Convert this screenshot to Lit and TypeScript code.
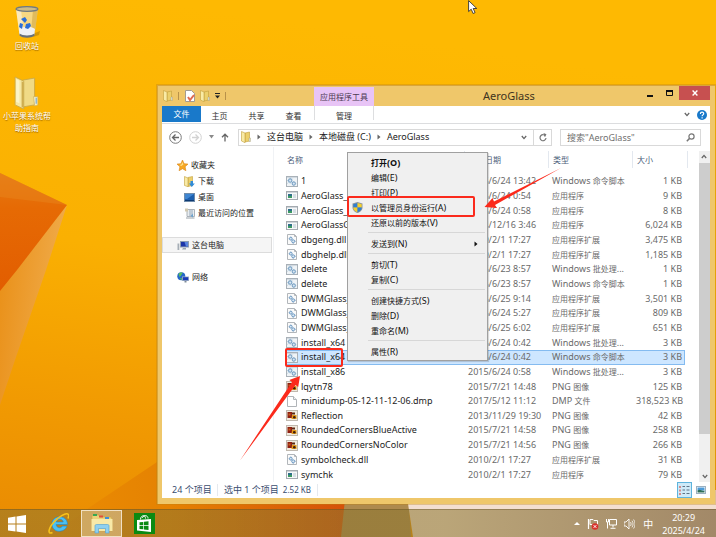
import { LitElement, html, css, svg, nothing, type TemplateResult } from "lit";
import { customElement, property, state } from "lit/decorators.js";
import { classMap } from "lit/directives/class-map.js";

/* Han runs are set one step smaller than the Latin text beside them. */
const t = (text: string) =>
  text
    .split(/([\u4e00-\u9fff]+)/)
    .filter((part) => part !== "")
    .map((part) => (/[\u4e00-\u9fff]/.test(part) ? html`<span class="han">${part}</span>` : part));

const base = css`
  * {
    box-sizing: border-box;
  }
  .han {
    font-size: 8px;
  }
  button,
  input {
    font: inherit;
    color: inherit;
    background: none;
    border: 0;
    padding: 0;
    margin: 0;
    white-space: nowrap;
  }
  a {
    color: inherit;
    text-decoration: none;
  }
  svg {
    display: block;
    flex: none;
  }
`;

const icon = (size: number, body: TemplateResult, h = size) =>
  html`<svg width=${size} height=${h} viewBox="0 0 ${size} ${h}" aria-hidden="true">${body}</svg>`;

const gears = svg`
  <g fill="#dbe8f3" stroke="#7ba3c6" stroke-width="1.1">
    <circle cx="4.2" cy="4.6" r="1.7"/><circle cx="7.8" cy="7.6" r="1.6"/>
  </g>
  <path d="M4.2 1.8v1M4.2 6.400v1M1.400 4.600h1M7.800 5v1M10.200 7.600h-1M7.800 9.300v.8M6.400 2.800l-.7.7M2.300 6.500l-.7.7" stroke="#8fb0cc" stroke-width="1"/>`;

const fileIcons: Record<string, TemplateResult> = {
  cmd: icon(12, svg`<rect x=".5" y=".5" width="11" height="10" fill="#eff3f6" stroke="#a9b1b8"/><path d="M1 1h10v1H1z" fill="#d2dae1"/>${gears}`, 11),
  exe: icon(12, svg`<rect x=".5" y="1.5" width="11" height="8" fill="#f7f8f9" stroke="#a4aab0"/><path d="M1 2h10v1H1z" fill="#cfd5da"/><rect x="2" y="4" width="4" height="4" fill="#2f6f8a"/><path d="M2 6h4v2H2z" fill="#3c9a62"/><path d="M7 4h3v4H7z" fill="#d6dfe5"/>`, 11),
  dll: icon(12, svg`<path d="M1.500.5h7l2 2v8h-9z" fill="#fafafa" stroke="#b2b6ba"/><path d="M8.500.5v2h2" fill="none" stroke="#b2b6ba"/><g fill="#dbe8f3" stroke="#6f9bc4" stroke-width="1"><circle cx="4.800" cy="4.700" r="1.400"/><circle cx="7.200" cy="7.300" r="1.500"/></g><path d="M4.800 2.600v.8M2.700 4.700h.8M7.200 9.300v.7M9.200 7.300h.7" stroke="#86a9c9"/>`, 11),
  png: icon(12, svg`<rect x=".5" y=".5" width="11" height="10" fill="#f1eadf" stroke="#c0b9af"/><rect x="1.500" y="2" width="4.500" height="6" fill="#8e1f12"/><path d="M2.500 3.500h2v2h-2z" fill="#c9601c"/><path d="M6 5h4.500v4H5.500z" fill="#e59a1a"/><circle cx="8.300" cy="7.300" r="1.300" fill="#3c1c10"/><path d="M6 2.500h3v2H6z" fill="#5d2a12"/>`, 11),
  dmp: icon(12, svg`<path d="M1.500.5h6l3 3v7h-9z" fill="#fff" stroke="#b0b4b8"/><path d="M7.500.5v3h3" fill="#eef0f2" stroke="#b0b4b8"/>`, 11),
};

const folder = (w: number, h: number) => html`<svg width=${w} height=${h} viewBox="0 0 24 32" preserveAspectRatio="none" aria-hidden="true">
  <path d="M8 4l11-2v26l-11 2z" fill="#f0da86" stroke="#c9a94a" stroke-width=".8"/>
  <path d="M18 20h4v8l-3 1z" fill="#f7efc4" stroke="#c9ae5a" stroke-width=".6"/>
  <path d="M20.500 21v6" stroke="#6ba3cf" stroke-width="1"/>
  <path d="M1 1l8 4v27l-8-4z" fill="#f6e7a2" stroke="#c9a94a" stroke-width=".8"/>
  <path d="M7 5l2 1v25l-2-1z" fill="#cfae50"/>
  <path d="M2 3l3 1.500v22L2 25z" fill="#fdf7d2" opacity=".8"/>
</svg>`;

const smallFolder = (w: number, h: number) => html`<svg width=${w} height=${h} viewBox="0 0 10 12" aria-hidden="true">
  <path d="M4 2l4.500-1v9L4 11z" fill="#ecd06c" stroke="#c39f3c" stroke-width=".6"/>
  <path d="M.5.500L4 2v9.700L.5 10z" fill="#f9eba6" stroke="#c39f3c" stroke-width=".6"/>
  <path d="M8 7h1.500v3.500H8z" fill="#d9e4e4" stroke="#a99a60" stroke-width=".4"/>
</svg>`;

const chevron = () => html`<svg width="6" height="5" viewBox="0 0 6 5" aria-hidden="true"><path d="M.8 1L3 3.600 5.200 1" fill="none" stroke="#666" stroke-width="1.300"/></svg>`;
const crumb = html`<svg width="4" height="6" viewBox="0 0 4 6" aria-hidden="true"><path d="M.5.5L3.500 3 .5 5.500z" fill="#666"/></svg>`;

interface FileRow {
  kind: string;
  name: string;
  date: string;
  type: string;
  size: string;
}

const f = (kind: string, name: string, date: string, type: string, size: string): FileRow => ({ kind, name, date, type, size });

const CMD = "Windows 命令脚本";
const BAT = "Windows 批处理...";
const APP = "应用程序";
const EXT = "应用程序扩展";
const PNG = "PNG 图像";

const FILES: FileRow[] = [
  f("cmd", "1", "2015/6/24 13:42", CMD, "1 KB"),
  f("exe", "AeroGlass_x64", "2015/6/24 0:54", APP, "9 KB"),
  f("exe", "AeroGlass_x86", "2015/6/24 0:58", APP, "8 KB"),
  f("exe", "AeroGlassGUI", "2014/12/16 3:46", APP, "6,024 KB"),
  f("dll", "dbgeng.dll", "2010/2/1 17:27", EXT, "3,475 KB"),
  f("dll", "dbghelp.dll", "2010/2/1 17:27", EXT, "1,185 KB"),
  f("cmd", "delete", "2015/6/23 8:57", BAT, "1 KB"),
  f("cmd", "delete", "2015/6/23 8:57", CMD, "1 KB"),
  f("dll", "DWMGlass_a", "2015/6/25 9:14", EXT, "3,501 KB"),
  f("dll", "DWMGlass_b", "2015/6/24 5:27", EXT, "809 KB"),
  f("dll", "DWMGlass_c", "2015/6/25 6:02", EXT, "651 KB"),
  f("cmd", "install_x64", "2015/6/24 0:42", BAT, "3 KB"),
  f("cmd", "install_x64", "2015/6/24 0:42", CMD, "3 KB"),
  f("cmd", "install_x86", "2015/6/24 0:58", BAT, "3 KB"),
  f("png", "lqytn78", "2015/7/21 14:48", PNG, "125 KB"),
  f("dmp", "minidump-05-12-11-12-06.dmp", "2017/5/12 11:12", "DMP 文件", "318,523 KB"),
  f("png", "Reflection", "2013/11/29 19:30", PNG, "42 KB"),
  f("png", "RoundedCornersBlueActive", "2015/7/21 14:58", PNG, "258 KB"),
  f("png", "RoundedCornersNoColor", "2015/7/21 14:56", PNG, "266 KB"),
  f("dll", "symbolcheck.dll", "2010/2/1 17:27", EXT, "31 KB"),
  f("exe", "symchk", "2010/2/1 17:27", APP, "79 KB"),
];

@customElement("context-menu")
class ContextMenu extends LitElement {
  static styles = [
    base,
    css`
      :host {
        display: block;
        padding: 2px 2px 1px;
        background: #f0f0f0;
        border: 1px solid #a0a0a0;
        box-shadow: 1px 1px 1px rgba(0, 0, 0, 0.15);
      }
      .menu {
        display: flex;
        flex-direction: column;
      }
      .item {
        display: grid;
        grid-template-columns: 21px 1fr auto;
        align-items: center;
        height: 15px;
        padding-right: 7px;
        line-height: 15px;
        text-align: left;
        color: #111;
      }
      .main {
        font-weight: 700;
      }
      .shield {
        margin-left: 2px;
      }
      .sep {
        height: 1px;
        margin: 2px 0 3px 18px;
        border: 0;
        background: #d7d7d7;
      }
    `,
  ];

  private readonly groups = [
    ["打开(O)", "编辑(E)", "打印(P)", "以管理员身份运行(A)", "还原以前的版本(V)"],
    ["发送到(N)"],
    ["剪切(T)", "复制(C)"],
    ["创建快捷方式(S)", "删除(D)", "重命名(M)"],
    ["属性(R)"],
  ];

  private item(label: string) {
    const admin = label.endsWith("(A)");
    return html`<button role="menuitem" class=${classMap({ item: true, main: label.endsWith("(O)") })}>
      <span class="shield">${admin
        ? icon(11, svg`<path d="M5.500 0l5 1.500v4c0 3-2.500 4.700-5 5.500-2.500-.8-5-2.500-5-5.500v-4z" fill="#8d959c"/><path d="M5.500 1v4.500H1.300V2.200z" fill="#2f7fd0"/><path d="M5.500 1v4.500h4.200V2.200z" fill="#f5d02c"/><path d="M5.500 5.500v4.700C3.300 9.400 1.300 8 1.300 5.500z" fill="#f5d02c"/><path d="M5.500 5.500v4.700c2.200-.8 4.200-2.200 4.200-4.700z" fill="#2f7fd0"/>`)
        : nothing}</span>
      <span>${t(label)}</span>
      ${label.endsWith("(N)") ? icon(4, svg`<path d="M.5.500L3.500 3l-3 2.500z" fill="#111"/>`, 6) : nothing}
    </button>`;
  }

  render() {
    return html`<div class="menu" role="menu">
      ${this.groups.map((group, i) => html`${i ? html`<hr class="sep" />` : nothing}${group.map((l) => this.item(l))}`)}
    </div>`;
  }
}

@customElement("file-list")
class FileList extends LitElement {
  @property({ type: Number }) selected = -1;

  static styles = [
    base,
    css`
      :host {
        display: grid;
        grid-template-columns: 1fr 11px;
        min-width: 0;
        min-height: 0;
      }
      .list {
        padding-left: 11px;
        padding-right: 14px;
        min-width: 0;
      }
      table {
        width: 100%;
        height: 100%;
        table-layout: fixed;
        border-collapse: collapse;
        white-space: nowrap;
      }
      th,
      td {
        padding: 0;
        line-height: 12px;
        vertical-align: middle;
        font-weight: 400;
        text-align: left;
      }
      .head {
        height: 27px;
        color: #4c607a;
      }
      .label {
        display: block;
        height: 17px;
        margin: 4px 0 6px;
        padding-left: 4px;
        line-height: 18px;
        border-left: 1px solid #e3e8ef;
      }
      .first {
        padding-left: 1px;
        border-left-color: transparent;
      }
      .last {
        margin-right: -3px;
        border-right: 1px solid #e3e8ef;
      }
      .date,
      .type {
        width: 84px;
      }
      .size {
        width: 53px;
      }
      td {
        color: #6a6a6a;
        padding-left: 4px;
      }
      .namecell {
        padding-left: 1px;
        color: #1c1c1c;
      }
      .name {
        display: flex;
        align-items: center;
        gap: 3px;
      }
      .num {
        text-align: right;
        padding-right: 3px;
      }
      .sel {
        background: #cde6ff;
        outline: 1px solid #84bbf0;
        outline-offset: -1px;
      }
      .scroll {
        display: flex;
        flex-direction: column;
        align-items: center;
        margin-top: 4px;
        background: #f0f0f0;
      }
      .arrow {
        display: grid;
        place-items: center;
        width: 11px;
        height: 12px;
      }
      .up {
        transform: rotate(180deg);
      }
      .thumb {
        width: 11px;
        height: 82%;
        background: #cdcdcd;
      }
      .track {
        flex: 1;
      }
    `,
  ];

  render() {
    return html`
      <div class="list">
        <table>
          <thead>
            <tr class="head">
              <th><span class="label first">${t("名称")}</span></th>
              <th class="date"><span class="label">${t("修改日期")}</span></th>
              <th class="type"><span class="label">${t("类型")}</span></th>
              <th class="size"><span class="label last">${t("大小")}</span></th>
            </tr>
          </thead>
          <tbody>
            ${FILES.map(
              (row, i) => html`<tr class=${classMap({ sel: i === this.selected })}>
                <td class="namecell"><span class="name">${fileIcons[row.kind]}<span>${row.name}</span></span></td>
                <td>${row.date}</td>
                <td>${t(row.type)}</td>
                <td class="num">${row.size}</td>
              </tr>`
            )}
          </tbody>
        </table>
      </div>
      <div class="scroll">
        <button class="arrow up" aria-label="向上滚动">${chevron()}</button>
        <div class="thumb"></div>
        <div class="track"></div>
        <button class="arrow" aria-label="向下滚动">${chevron()}</button>
      </div>
    `;
  }
}

@customElement("explorer-window")
class ExplorerWindow extends LitElement {
  @state() private selected = 12;

  static styles = [
    base,
    css`
      :host {
        display: flex;
        flex-direction: column;
        padding: 0 5px 6px 4px;
        background: #efc76a;
        border: solid #d8a53c;
        border-width: 1px 0 0 1px;
        box-shadow: 0 0 0 1px rgba(190, 130, 20, 0.35);
      }
      .title {
        display: grid;
        grid-template-columns: 152px 60px 1fr auto;
        height: 20px;
      }
      .quick {
        display: flex;
        align-items: center;
        gap: 5px;
        padding-left: 1px;
      }
      .bar {
        width: 1px;
        height: 8px;
        background: #b8924a;
      }
      .tool {
        margin-top: 1px;
        background: #e8c4f6;
        color: #4a3a52;
        text-align: center;
        line-height: 19px;
      }
      .caption {
        padding-left: 109px;
        font-size: 11px;
        line-height: 20px;
        color: #3f3420;
      }
      .controls {
        display: flex;
        align-items: flex-start;
      }
      .ctl {
        display: grid;
        place-items: center;
        width: 19px;
        height: 15px;
      }
      .close {
        width: 31px;
        height: 14px;
        background: #c75050;
      }
      .ribbon {
        display: flex;
        height: 18px;
        background: #fff;
        border-bottom: 1px solid #dcdddf;
        line-height: 19px;
        color: #333;
      }
      .tab {
        width: 37px;
        text-align: center;
      }
      .file {
        width: 39px;
        height: 16px;
        line-height: 16px;
        background: #1979ca;
        color: #fff;
      }
      .tabs {
        display: flex;
        flex: 1;
      }
      .manage {
        width: 60px;
        height: 14px;
        margin-left: 2px;
        line-height: 19px;
        border: solid #dddee0;
        border-width: 0 1px;
      }
      .right {
        display: flex;
        align-items: center;
        gap: 7px;
        padding-right: 3px;
      }
      .nav {
        display: flex;
        align-items: center;
        height: 23px;
        padding: 3px 9px 0 7px;
        background: #fff;
        color: #222;
      }
      .history {
        display: flex;
        align-items: center;
        gap: 7px;
        width: 69px;
      }
      .address {
        display: flex;
        flex: 1;
        align-items: center;
        gap: 6px;
        height: 17px;
        padding-left: 2px;
        border: 1px solid #d9d9d9;
      }
      .address .han {
        font-size: 9px;
      }
      .fill {
        flex: 1;
      }
      .refresh {
        display: grid;
        place-items: center;
        width: 18px;
        height: 15px;
        border-left: 1px solid #d9d9d9;
      }
      .search {
        display: flex;
        align-items: center;
        width: 141px;
        height: 17px;
        margin-left: 8px;
        padding: 0 5px 0 6px;
        border: 1px solid #d9d9d9;
      }
      .query {
        flex: 1;
        min-width: 0;
        height: 15px;
        outline: none;
      }
      .query::placeholder {
        color: #6f6f6f;
        opacity: 1;
      }
      .body {
        display: grid;
        grid-template-columns: 112px 1fr;
        flex: 1;
        min-height: 0;
        background: #fff;
      }
      .side {
        display: flex;
        flex-direction: column;
        gap: 16px;
        padding-top: 10px;
        border-right: 1px solid #f0f2f5;
        color: #222;
      }
      .group {
        display: flex;
        flex-direction: column;
      }
      .place {
        display: flex;
        align-items: center;
        gap: 3px;
        height: 16px;
        padding-left: 14px;
        border: 1px solid transparent;
      }
      .sub {
        padding-left: 21px;
      }
      .current {
        margin-right: 1px;
        background: #f5f5f5;
        border-color: #dcdcdc;
      }
      .status {
        display: flex;
        align-items: center;
        height: 16px;
        padding-left: 10px;
        background: #fff;
        color: #3a4d6e;
      }
      .status .han {
        font-size: 9px;
      }
      .count {
        width: 46px;
        border-right: 1px solid #e6e9ee;
      }
      .chosen {
        display: flex;
        gap: 4px;
        margin-left: 6px;
        padding-right: 6px;
        border-right: 1px solid #e6e9ee;
      }
      .bytes {
        font-size: 8px;
      }
      .view {
        display: grid;
        place-items: center;
        width: 15px;
        height: 16px;
      }
      .on {
        background: #cfeaf8;
        border: 1px solid #5eb4dd;
      }
      .views {
        display: flex;
        gap: 1px;
        margin-left: auto;
        padding-right: 2px;
      }
      context-menu {
        position: absolute;
        left: 189px;
        top: 66px;
        width: 141px;
      }
      .marks {
        position: absolute;
        left: 79px;
        top: 63px;
        pointer-events: none;
      }
    `,
  ];

  private title() {
    return html`<header class="title">
      <div class="quick">
        ${smallFolder(10, 12)}
        <span class="bar"></span>
        <button aria-label="属性">${icon(11, svg`<path d="M1.500.5h6l3 3v8h-9z" fill="#fff" stroke="#a39c90"/><path d="M4 7l2 3 4-5" fill="none" stroke="#e06a50" stroke-width="2"/>`, 12)}</button>
        <button aria-label="新建文件夹">${smallFolder(10, 12)}</button>
        <button aria-label="自定义快速访问工具栏">${icon(5, svg`<path d="M0 0h5v1H0zM0 2.500h5L2.500 5.500z" fill="#222"/>`, 6)}</button>
        <span class="bar"></span>
      </div>
      <span class="tool">${t("应用程序工具")}</span>
      <span class="caption">AeroGlass</span>
      <div class="controls">
        <button class="ctl" aria-label="最小化">${icon(7, svg`<path d="M0 6h6v2H0z" fill="#111"/>`, 10)}</button>
        <button class="ctl" aria-label="最大化">${icon(7, svg`<path d="M.5.500h6v5h-6z" fill="none" stroke="#111"/><path d="M0 0h7v2H0z" fill="#111"/>`, 8)}</button>
        <button class="ctl close" aria-label="关闭">${icon(6, svg`<path d="M.6.600l4.800 4.800M5.400.600L.6 5.400" stroke="#fff" stroke-width="1.400"/>`)}</button>
      </div>
    </header>`;
  }

  private nav() {
    return html`<div class="nav">
      <div class="history">
        <button aria-label="后退">${icon(13, svg`<circle cx="6.500" cy="6.500" r="5.800" fill="none" stroke="#7b7b7b"/><path d="M10 6.500H3.500M6.500 3.500l-3 3 3 3" fill="none" stroke="#666" stroke-width="1.300"/>`)}</button>
        <button aria-label="前进">${icon(13, svg`<circle cx="6.500" cy="6.500" r="5.800" fill="none" stroke="#d2d2d2"/><path d="M3 6.500h6.500M6.500 3.500l3 3-3 3" fill="none" stroke="#d2d2d2" stroke-width="1.300"/>`)}</button>
        <button aria-label="最近浏览的位置">${icon(5, svg`<path d="M0 0h5L2.500 3.500z" fill="#8a8a8a"/>`, 4)}</button>
        <button aria-label="上移">${icon(8, svg`<path d="M4 8.500V1.500M1 4.300L4 1.200l3 3.100" fill="none" stroke="#666" stroke-width="1.300"/>`, 9)}</button>
      </div>
      <nav class="address" aria-label="地址">
        ${smallFolder(10, 12)} ${crumb}
        <a href="#pc">${t("这台电脑")}</a>
        ${crumb}
        <a href="#c">${t("本地磁盘 (C:)")}</a>
        ${crumb}
        <a href="#aero">AeroGlass</a>
        <span class="fill"></span>
        <button aria-label="以前的位置">${chevron()}</button>
        <button class="refresh" aria-label="刷新">${icon(8, svg`<path d="M6.600 3.200A3 3 0 1 0 7 5" fill="none" stroke="#777" stroke-width="1.200"/><path d="M4.500 0L7.500 1.200 5.500 4z" fill="#777"/>`, 9)}</button>
      </nav>
      <label class="search">
        <input class="query" type="text" aria-label="搜索" placeholder='搜索"AeroGlass"' />
        ${icon(9, svg`<circle cx="5.500" cy="3.500" r="2.600" fill="none" stroke="#777" stroke-width="1.200"/><path d="M3.600 5.400L.8 8.200" stroke="#777" stroke-width="1.500"/>`)}
      </label>
    </div>`;
  }

  private side() {
    const star = icon(11, svg`<path d="M5.500 0l1.600 3.700 3.900.4-2.900 2.600.8 4L5.500 8.700 2.100 10.700l.8-4L0 4.100l3.900-.4z" fill="#f7a823" stroke="#d9841a" stroke-width=".6"/><path d="M5.500 2l.9 2.400-2 1.600-2-.9 2-.6z" fill="#fde08a"/>`);
    const download = icon(11, svg`<path d="M4 1.500l4.500-1v9L4 10.500z" fill="#ecd06c" stroke="#c39f3c" stroke-width=".6"/><path d="M.5.500L4 2v8.700L.5 9.500z" fill="#f9eba6" stroke="#c39f3c" stroke-width=".6"/><path d="M6.500 5h2.500v2.500h1.800L7.800 11 4.800 7.500h1.700z" fill="#2f8bd8"/>`);
    const desktop = icon(11, svg`<rect x=".5" y="1.500" width="10" height="8" fill="#1d5fae" stroke="#6f8cab"/><path d="M1 2h9L3 7H1z" fill="#3f86d2"/><path d="M1 8h9v1H1z" fill="#0f3a72"/>`);
    const recent = icon(11, svg`<path d="M3 1.500h7.500v7H3z" fill="#e9edf0" stroke="#98a1a8" stroke-width=".8"/><path d="M5 3h4M5 5h4M5 7h3" stroke="#7f98ad" stroke-width=".8"/><path d="M1 .5h3v3H1z" fill="#d0c8b0"/><path d="M2 10h8.500" stroke="#98a1a8"/><path d="M6.500 8L9 5.500v4z" fill="#6ea2cd"/>`);
    const pc = icon(12, svg`<path d="M3 1h9v6.500H3z" fill="#8d9db0"/><path d="M4 2h7v4.500H4z" fill="#1c35a8"/><path d="M7.500 2H11v4.500H9z" fill="#5a86df"/><path d="M6 8h3v1.500H5z" fill="#9aa6b2"/><path d="M.5 3.500h1.800v6.500H.5z" fill="#a6aeb6"/>`, 11);
    const net = icon(12, svg`<circle cx="4.300" cy="4.300" r="4" fill="#2467c9"/><path d="M1.500 2c1.500-1.800 4-1.500 4-1L4 3.500 2.500 5z" fill="#5cc05a"/><path d="M3 6l2.500.5L4.500 8.200z" fill="#5cc05a"/><path d="M5 4.500h7V9H5z" fill="#9fb0c2"/><path d="M5.800 5.200h5.400v3H5.800z" fill="#1a3bb8"/><path d="M7.500 9h2v1.500h-2z" fill="#7e8c99"/>`, 11);
    return html`<nav class="side" aria-label="导航窗格">
      <div class="group">
        <a class="place" href="#fav">${star}${t("收藏夹")}</a>
        <a class="place sub" href="#down">${download}${t("下载")}</a>
        <a class="place sub" href="#desk">${desktop}${t("桌面")}</a>
        <a class="place sub" href="#recent">${recent}${t("最近访问的位置")}</a>
      </div>
      <div class="group"><a class="place current" href="#pc">${pc}${t("这台电脑")}</a></div>
      <div class="group"><a class="place" href="#net">${net}${t("网络")}</a></div>
    </nav>`;
  }

  render() {
    return html`
      ${this.title()}
      <div class="ribbon">
        <div class="tabs">
          <button class="tab file">${t("文件")}</button>
          <button class="tab">${t("主页")}</button>
          <button class="tab">${t("共享")}</button>
          <button class="tab">${t("查看")}</button>
          <button class="manage">${t("管理")}</button>
        </div>
        <div class="right">
          <button aria-label="展开功能区">${chevron()}</button>
          <button aria-label="帮助">${icon(10, svg`<circle cx="5" cy="5" r="5" fill="#1979ca"/><path d="M3.400 3.900c0-2.300 3.300-2.200 3.300-.2 0 1.200-1.600 1.200-1.600 2.500M5.100 7.200v1.200" fill="none" stroke="#fff" stroke-width="1.200"/>`)}</button>
        </div>
      </div>
      ${this.nav()}
      <div class="body">
        ${this.side()}
        <file-list .selected=${this.selected}></file-list>
      </div>
      <footer class="status">
        <span class="count">${t("24 个项目")}</span>
        <span class="chosen"><span>${t("选中 1 个项目")}</span><span class="bytes">2.52 KB</span></span>
        <span class="views">
          <button class="view on" aria-label="详细信息">${icon(11, svg`<path d="M0 1h2v2H0zM0 4.500h2v2H0zM0 8h2v2H0z" fill="#d58b8b"/><path d="M3.500 1.500H6M3.500 5H6M3.500 8.500H6M7.500 1.500h3M7.500 5h3M7.500 8.500h3" stroke="#5d7488"/>`)}</button>
          <button class="view" aria-label="大图标">${icon(10, svg`<rect x=".5" y=".5" width="9" height="7" fill="#fff" stroke="#9cb0c0"/><path d="M1.500 1.500h7v3h-7z" fill="#4d9bd8"/><path d="M1.500 4.500c3-2 4 1 7 0v2h-7z" fill="#2e6f58"/>`, 8)}</button>
        </span>
      </footer>
      <context-menu></context-menu>
      <svg class="marks" width="330" height="316" viewBox="237 149 330 316" aria-hidden="true">
        <g fill="none" stroke="#fb2a1c" stroke-width="2">
          <rect x="348" y="197" width="126" height="19" rx="1" />
          <rect x="286" y="349" width="56" height="17" rx="1" />
        </g>
        <path d="M561 168L495 205l2 3-12.500-1 8-9 1.500 3.500z" fill="#fb2a1c" />
        <path d="M240 460.500L292 382l-2.700-2L300 376l-1.800 11-2.700-2z" fill="#fb2a1c" />
      </svg>
    `;
  }
}

@customElement("app-root")
class AppRoot extends LitElement {
  static styles = [
    base,
    css`
      :host {
        position: relative;
        display: grid;
        grid-template-rows: 1fr 28px;
        height: 100vh;
        overflow: hidden;
        font: 9px/12px "Noto Sans", "Noto Sans CJK SC", sans-serif;
        background: #fdb700;
      }
      .paper {
        position: absolute;
        inset: 0;
        width: 100%;
        height: 100%;
      }
      .desk {
        position: relative;
        min-height: 0;
      }
      .icons {
        display: flex;
        flex-direction: column;
        gap: 24px;
        width: 54px;
        padding-top: 5px;
      }
      .shortcut {
        display: flex;
        flex-direction: column;
        align-items: center;
        gap: 1px;
        color: #fff;
        text-align: center;
        text-shadow: 0 1px 1px rgba(90, 50, 0, 0.6);
      }
      explorer-window {
        position: absolute;
        left: 157px;
        top: 85px;
        right: 1px;
        bottom: 5px;
      }
      .pointer {
        position: absolute;
        left: 468px;
        top: 0;
      }
      .task {
        position: relative;
        display: flex;
        align-items: center;
        background: linear-gradient(to right, rgba(139, 117, 48, 0.55) 62%, rgba(95, 65, 18, 0.55));
        border-top: 1px solid rgba(90, 70, 30, 0.35);
        color: #fff;
      }
      .apps {
        display: flex;
        align-items: center;
        flex: 1;
      }
      .start {
        padding: 0 22px 0 8px;
      }
      .running {
        display: grid;
        place-items: center;
        width: 41px;
        height: 27px;
        margin: 0 12px;
        background: rgba(255, 245, 230, 0.35);
        border: 1px solid rgba(255, 250, 240, 0.7);
      }
      .tray {
        display: flex;
        align-items: center;
        gap: 7px;
        padding-right: 11px;
      }
      .ime {
        padding: 0 2px 0 1px;
        font-size: 10px;
      }
      .clock {
        display: flex;
        flex-direction: column;
        text-align: center;
        line-height: 13px;
      }
    `,
  ];

  private wallpaper() {
    return html`<svg class="paper" viewBox="0 0 716 537" preserveAspectRatio="none" aria-hidden="true">
      <defs>
        <linearGradient id="sky" x1="0.2" y1="0" x2="0" y2="1">
          <stop offset="0" stop-color="#feb902" /><stop offset=".45" stop-color="#fab002" />
          <stop offset=".75" stop-color="#f19a02" /><stop offset="1" stop-color="#e98a02" />
        </linearGradient>
        <linearGradient id="dark" x1="0" y1="0" x2="0" y2="1"><stop offset="0" stop-color="#e67a12" /><stop offset=".3" stop-color="#e66a04" /><stop offset="1" stop-color="#e25d00" /></linearGradient>
        <linearGradient id="facet" x1="0" y1="0" x2="1" y2=".3"><stop offset="0" stop-color="#e98e14" /><stop offset="1" stop-color="#f0ac4c" /></linearGradient>
        <linearGradient id="low" x1="0" y1="0" x2="1" y2="0"><stop offset="0" stop-color="#eb8c02" /><stop offset=".4" stop-color="#e58202" /><stop offset="1" stop-color="#d4500a" /></linearGradient>
      </defs>
      <path d="M0 0h716v537H0z" fill="url(#sky)" />
      <path d="M50 537L90 507 160 460 350 440v97z" fill="url(#low)" />
      <path d="M346 490h62l3 47h-70z" fill="#ae8a4e" />
      <path d="M406 490h310v47H413z" fill="#f3dfd0" />
      <path d="M67 205L46 270 15 360 0 405V288z" fill="url(#facet)" />
      <path d="M0 173L67 205 17 270 0 291z" fill="url(#dark)" />
      <path d="M0 197L67 205 0 173z" fill="#e98a20" opacity=".4" />
    </svg>`;
  }

  private bin() {
    return html`<svg width="28" height="34" viewBox="0 0 28 34" aria-hidden="true">
      <path d="M22 28l5-2-1 4-6 2z" fill="#8a5a00" opacity=".35" />
      <path d="M3 4h22l-3.500 26c-2 2.500-13 2.500-15 0z" fill="#f4e5b4" opacity=".72" />
      <path d="M3 4l3.500 26c2 2 4 2 5 2L8 5z" fill="#fff" opacity=".45" />
      <path d="M25 4l-3.500 26-4 1.500L20 5z" fill="#c49a30" opacity=".45" />
      <path d="M6 24c4-3 12-3 16 0l-.8 5.500c-3 3-11.500 3-14.500 0z" fill="#eef1f5" />
      <path d="M6.500 28.500c3 2.500 12 2.500 15 0v2c-3 3-12 3-15 0z" fill="#667079" />
      <ellipse cx="14" cy="4" rx="11" ry="2.400" fill="#cdbb86" stroke="#6e7880" stroke-width="1.200" />
      <path d="M8 14l4-2 2 3-2 3-2-2zM7 18l3 1-1 5-3-2zM13 19l4-1 1 3-3 3-3-1z" fill="#2a6fd8" />
    </svg>`;
  }

  render() {
    return html`
      ${this.wallpaper()}
      <main class="desk">
        <div class="icons">
          <a class="shortcut" href="#bin">${this.bin()}<span>${t("回收站")}</span></a>
          <a class="shortcut" href="#guide">${folder(26, 33)}<span>${t("小苹果系统帮")}<br />${t("助指南")}</span></a>
        </div>
        <explorer-window></explorer-window>
      </main>
      <footer class="task">
        <div class="apps">
          <button class="start" aria-label="开始">${icon(18, svg`<path d="M0 2.800L7.500 1.600V8.600H0zM8.500 1.500L18 0v8.600H8.500zM0 9.600h7.500v7L0 15.500zM8.500 9.600H18V18l-9.500-1.400z" fill="#fff"/>`)}</button>
          <button aria-label="Internet Explorer">${icon(21, svg`<path d="M19.500 11.500H8.200c.3 3.800 4.900 4.300 6.200 1.600h4.600c-2.400 7.300-15 7.200-15-2.200 0-9.200 15.500-9.900 15.500.6zM8.300 9h6.900c-.4-3.600-6.300-3.700-6.900 0z" fill="#4cc0f2" stroke="#1f86cc" stroke-width=".6"/><path d="M4.500 19.500C-1 22 .5 15 6 9 11 3.500 18-.5 20 1.200c1 .8.700 2.700 0 4.300" fill="none" stroke="#f7c21a" stroke-width="1.600"/>`)}</button>
          <button class="running" aria-label="文件资源管理器">${icon(24, svg`<path d="M2 3l1-1h6l1 2h11l1 2v12H2z" fill="#ecd27a" stroke="#c9a648" stroke-width=".6"/><path d="M3 1h4v2H3z" fill="#35a852"/><path d="M9 2.500h4v2H9z" fill="#e0503c"/><path d="M15 4h4v2h-4z" fill="#3f8fd8"/><path d="M1.500 6h21v12h-21z" fill="#f8e9a8"/><path d="M5 20v-7c0-1 .5-1.500 1.500-1.500h11c1 0 1.500.5 1.500 1.500v7h-3.500v-4.500h-7V20z" fill="#8fd0f0" stroke="#5ba6d2" stroke-width=".7"/>`, 21)}</button>
          <button aria-label="应用商店">${icon(21, svg`<path d="M0 0h21v21H0z" fill="#0b8a12"/><path d="M3 7l14-1v13l-14-1.500z" fill="#fff"/><path d="M6.500 6.500C6.500 2 11.500 1.500 11.500 5.500M8.500 5c0-3 5.500-3.500 5.500.5" fill="none" stroke="#fff"/><path d="M5.500 9.300l3.800-.4v3.300H5.500zM10 8.800l4.500-.5v3.900H10zM5.500 13h3.800v3.300l-3.800-.4zM10 13h4.500v3.900l-4.500-.5z" fill="#0b8a12"/>`)}</button>
        </div>
        <div class="tray">
          <button aria-label="显示隐藏的图标">${icon(6, svg`<path d="M0 4h6L3 1z" fill="#fff"/>`, 5)}</button>
          ${icon(12, svg`<path d="M1.500 1v10" stroke="#fff" stroke-width="1.200"/><path d="M3 1.500h3l1 1h3.500v5H7l-1-1H3z" fill="none" stroke="#fff"/><circle cx="8" cy="8.500" r="3.300" fill="#d8322c"/><path d="M6.700 7.200l2.600 2.600M9.300 7.200L6.700 9.800" stroke="#fff"/>`, 12)}
          ${icon(11, svg`<path d="M3.500 1.500h7v5.500h-7z" fill="none" stroke="#fff"/><path d="M7 7v2.500M4.500 10.300h5M.5 1v3h2V1M1.500 4v6.500" fill="none" stroke="#fff"/>`, 12)}
          ${icon(11, svg`<path d="M0 4h2l3-3v10L2 8H0z" fill="none" stroke="#fff" stroke-width=".9"/><path d="M6.500 4c.8 1.200.8 2.800 0 4M8 2.700c1.400 2 1.400 4.600 0 6.600M9.600 1.500c2 2.800 2 6.200 0 9" fill="none" stroke="#fff" stroke-width=".8"/>`, 12)}
          <span class="ime">中</span>
          <time class="clock" datetime="2025-04-24T20:29"><span>20:29</span><span>2025/4/24</span></time>
        </div>
      </footer>
      <svg class="pointer" width="11" height="15" viewBox="0 0 11 15" aria-hidden="true">
        <path d="M.6.600v11l2.600-2.400 1.900 4.300 2-.9-1.900-4.100h3.600z" fill="#fff" stroke="#333" stroke-width=".9" />
      </svg>
    `;
  }
}
